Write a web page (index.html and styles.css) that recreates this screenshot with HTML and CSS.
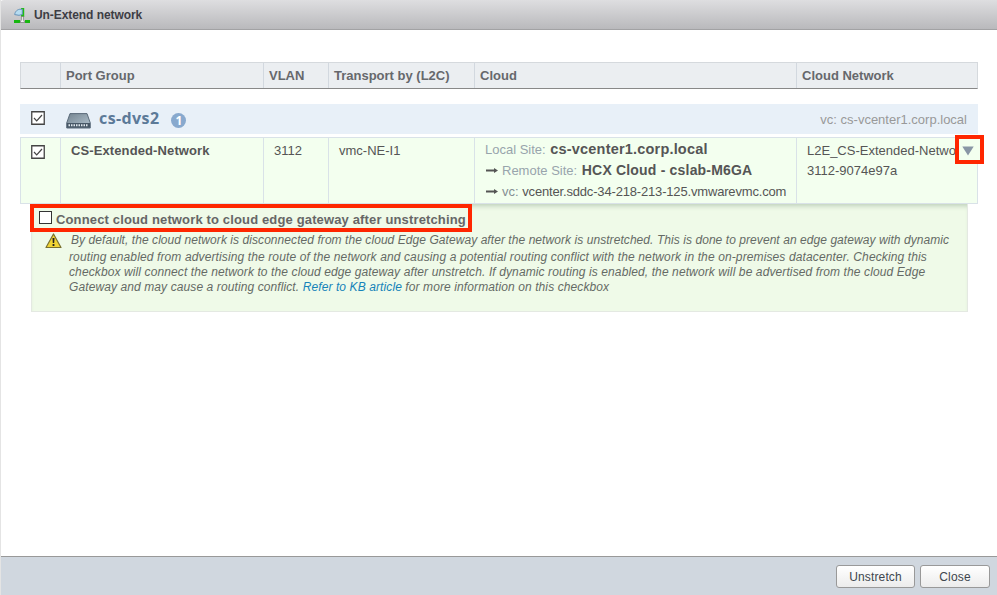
FILE: index.html
```html
<!DOCTYPE html>
<html lang="en">
<head>
<meta charset="utf-8">
<title>Un-Extend network</title>
<link rel="stylesheet" href="styles.css">
</head>
<body>
<div class="dialog">
  <header class="titlebar">
    <svg class="title-icon" width="17" height="17" viewBox="0 0 17 17"><path d="M7 1h3.2v9H7z" fill="#1fbd12"/><path d="M.7 7.6C1 4.5 3.5 2 7 2.2h1.3v5.3L5 8.3z" fill="#b6dcf1" stroke="#6593b9"/><path d="M0 13h6v3H0zM11 13h5v3h-5z" fill="#17b60f"/><path d="M7.4 9.5h2v3.3l1.5 2.7H6l1.4-2.7z" fill="#eee" stroke="#777" stroke-width=".7"/></svg>
    <h1>Un-Extend network</h1>
  </header>
  <main>
    <div class="row head">
      <div></div><div>Port Group</div><div>VLAN</div><div>Transport by (L2C)</div><div>Cloud</div><div>Cloud Network</div>
    </div>
    <div class="group">
      <svg class="check" width="14" height="14" viewBox="0 0 14 14"><path d="M.75.75h12.5v12.5H.75z" fill="#fff" stroke="#444" stroke-width="1.3"/><path d="m3 7 2.7 2.8L11 4" fill="none" stroke="#444" stroke-width="1.2"/></svg>
      <svg class="switch" width="25" height="17" viewBox="0 0 25 17"><defs><linearGradient id="metal" x2="1" y2="1"><stop stop-color="#748490"/><stop offset="1" stop-color="#b4c5d1"/></linearGradient></defs><path d="M4 1.6h17L24.3 11v5H.7v-5z" fill="url(#metal)" stroke="#5b6b7a"/><path d="M1 11h23v4.8H1z" fill="#485867"/><path d="M2.5 13.2h20" stroke="#dfe8ee" stroke-width="2" stroke-dasharray="1.5 1"/></svg>
      <b class="group-name">cs-dvs2</b><span class="badge">1</span>
      <span class="group-vc">vc: cs-vcenter1.corp.local</span>
    </div>
    <div class="row data">
      <div><svg class="check" width="14" height="14" viewBox="0 0 14 14"><path d="M.75.75h12.5v12.5H.75z" fill="#fff" stroke="#444" stroke-width="1.3"/><path d="m3 7 2.7 2.8L11 4" fill="none" stroke="#444" stroke-width="1.2"/></svg></div>
      <div><b class="port">CS-Extended-Network</b></div>
      <div>3112</div>
      <div>vmc-NE-I1</div>
      <div class="cloud">
        <p><span class="label">Local Site:</span> <b class="local">cs-vcenter1.corp.local</b></p>
        <p><svg class="arrow" width="12" height="7" viewBox="0 0 12 7"><path d="M0 2.5h8V1l4 2.5L8 6V4.5H0z" fill="#555"/></svg><span class="label">Remote Site:</span> <b class="remote">HCX Cloud - cslab-M6GA</b></p>
        <p><svg class="arrow" width="12" height="7" viewBox="0 0 12 7"><path d="M0 2.5h8V1l4 2.5L8 6V4.5H0z" fill="#555"/></svg><span class="vc">vc:</span> <span class="host">vcenter.sddc-34-218-213-125.vmwarevmc.com</span></p>
      </div>
      <div class="network"><p>L2E_CS-Extended-Netwo</p><p>3112-9074e97a</p>
        <div class="expand"><svg width="12" height="10" viewBox="0 0 12 10"><path d="M.3.5h11.4L6 9.5z" fill="#8996a5"/></svg></div>
      </div>
    </div>
    <section class="panel">
      <div class="option"><span class="box"></span><b>Connect cloud network to cloud edge gateway after unstretching</b></div>
      <div class="note">
        <svg class="warn" width="17" height="16" viewBox="0 0 17 16"><path d="M8.5 1 16 14.5H1z" fill="#f0d435" stroke="#79702f" stroke-linejoin="round" stroke-width="1.2"/><path d="M7.5 5h2l-.3 5H7.8zM7.6 11h1.8v2H7.6z" fill="#222"/></svg>
        <div class="lines">
          <p class="l1">By default, the cloud network is disconnected from the cloud Edge Gateway after the network is unstretched. This is done to prevent an edge gateway with dynamic</p>
          <p class="l2">routing enabled from advertising the route of the network and causing a potential routing conflict with the network in the on-premises datacenter. Checking this</p>
          <p class="l3">checkbox will connect the network to the cloud edge gateway after unstretch. If dynamic routing is enabled, the network will be advertised from the cloud Edge</p>
          <p class="l4">Gateway and may cause a routing conflict. <a>Refer to KB article</a> for more information on this checkbox</p>
        </div>
      </div>
    </section>
  </main>
  <footer><button class="primary">Unstretch</button><button class="close">Close</button></footer>
</div>
</body>
</html>
```
FILE: styles.css
```css
* { box-sizing: border-box; }
body { margin: 0; background: #fff; color: #555; font: 13px/20px "Liberation Sans", Arial, sans-serif; }
p, h1 { margin: 0; white-space: nowrap; }
.dialog { width: 997px; height: 595px; display: flex; flex-direction: column; border-left: 1px solid #e4e4e4; overflow: hidden; }
.titlebar { height: 30px; margin-left: -1px; flex: none; display: flex; align-items: center; padding-left: 14px; background: linear-gradient(#dedee0, #b9b9bc); border-bottom: 1px solid #a2a2a4; border-radius: 4px 0 0 0; }
.title-icon { margin-top: 2px; }
h1 { margin-left: 3px; font-size: 12px; letter-spacing: -.07px; color: #3d3d45; }
main { flex: 1; padding: 32px 19px 0; }
.row { display: grid; grid-template-columns: 39px 203px 65px 146px 322px 181px; width: 958px; }
.head { height: 27px; background: #ebeef1; border: 1px solid #d5d9dd; border-bottom-color: #888; font-weight: bold; color: #66686c; line-height: 25px; }
.head div + div { padding-left: 5px; border-left: 1px solid #d2d8df; }
.group { height: 30px; width: 958px; margin-top: 15px; background: #e8f0f8; display: flex; align-items: center; padding: 0 11px; }
.group .check { margin: -3px 0 0; }
.check { display: block; flex: none; }
.switch { margin: 3px 0 0 21px; }
.group-name { margin: -2px 0 0 8px; font: 700 16px/20px "Open Sans", sans-serif; letter-spacing: .4px; color: #5c7a98; }
.badge { width: 15px; height: 15px; margin: 2px 0 0 12px; border-radius: 50%; background: #88a9ce; color: #fff; font: bold 12px/15px "Open Sans", sans-serif; text-align: center; }
.group-vc { margin: 2px 0 0 auto; color: #999; }
.data { height: 67px; margin-top: 3px; border: 1px solid #d9e2e8; background: #f3ffef; }
.data > div { padding: 3px 0 0 10px; }
.data > div + div { border-left: 1px solid #d9e2e8; }
.data .check { margin-top: 4px; }
.data .network { position: relative; }
.port { letter-spacing: .11px; }
.label { color: #98a4ac; }
.vc { color: #858f94; }
.data .cloud { padding-top: 2px; }
.cloud p { height: 21px; }
.cloud b { font-size: 14px; line-height: 18px; margin-left: 1px; }
.cloud .local { font-size: 14.5px; letter-spacing: .19px; }
.remote { letter-spacing: .19px; }
.host { letter-spacing: -.17px; }
.arrow { margin: 0 4px 1px 1px; }
.expand { position: absolute; left: 158px; top: -3px; width: 29px; height: 29px; border: 4px solid #ff2600; display: flex; align-items: center; justify-content: center; padding: 2px 4px 0 0; background: #f3ffef; }
.panel { width: 937px; height: 108px; margin-left: 11px; padding: 0 0 0 9px; background: #effae8; border: 1px solid #e4e9e2; border-top: 0; box-shadow: inset 0 5px 5px -3px #bdcfba; }
.option { width: 442px; height: 28px; margin-left: -11px; border: 4px solid #ff2600; display: flex; align-items: center; padding: 0 0 0 5px; white-space: nowrap; color: #666; background: #effae8; }
.box { width: 13px; height: 13px; border: 1px solid #333; background: #fff; margin: -1px 4px 0 0; flex: none; }
.option b { padding-top: 3px; letter-spacing: .145px; }
.note { display: flex; padding: 1px 0 0 4px; font-size: 12px; font-style: italic; color: #656a65; }
.warn { flex: none; }
.lines { margin-left: 7px; }
.lines p { height: 15px; line-height: 15px; }
.lines .l1 { height: 17px; padding-left: 2px; letter-spacing: .064px; }
.l2 { letter-spacing: .12px; }
.l3 { letter-spacing: .108px; }
.l4 { letter-spacing: .1px; }
a { color: #1683b9; }
footer { height: 39px; margin-left: -1px; flex: none; border-top: 1px solid #999; background: #d0d7df; display: flex; gap: 5px; justify-content: flex-end; align-items: center; padding: 1px 7px 0 0; }
button { height: 23px; padding: 0; border: 1px solid #999; border-radius: 3px; background: linear-gradient(#fff, #ececec); font: 12px/20px "Liberation Sans", Arial, sans-serif; color: #40464e; letter-spacing: .15px; }
.primary { width: 79px; }
.close { width: 70px; }
```
